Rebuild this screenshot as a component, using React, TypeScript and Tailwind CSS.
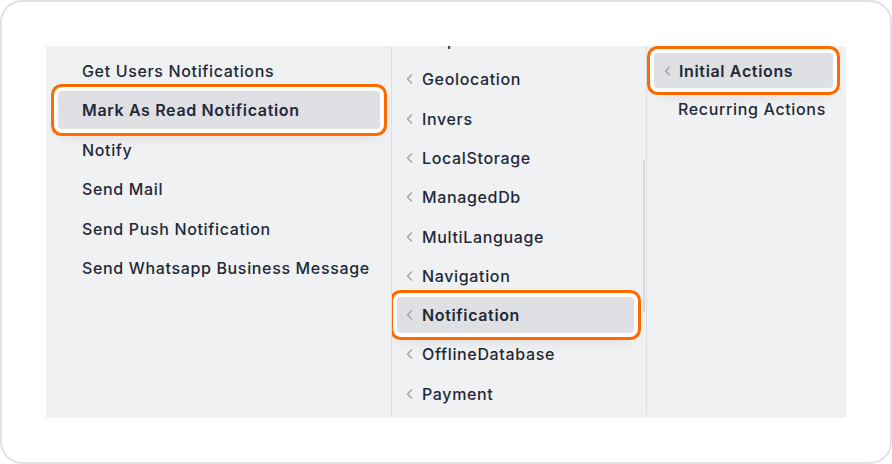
import type { FC } from 'react';

const font = { fontFamily: 'Inter, "Noto Sans", sans-serif' };

const Chevron: FC = () => (
  <svg width="7" height="10" viewBox="0 0 7 10" className="shrink-0">
    <polyline
      points="5.5,1 1.5,5 5.5,9"
      fill="none"
      stroke="#9ca3af"
      strokeWidth="1.4"
      strokeLinecap="round"
      strokeLinejoin="round"
    />
  </svg>
);

const actions = [
  'Get Users Notifications',
  'Mark As Read Notification',
  'Notify',
  'Send Mail',
  'Send Push Notification',
  'Send Whatsapp Business Message',
];

const components = [
  'Map',
  'Geolocation',
  'Invers',
  'LocalStorage',
  'ManagedDb',
  'MultiLanguage',
  'Navigation',
  'Notification',
  'OfflineDatabase',
  'Payment',
];

const highlight =
  'rounded-[4px] bg-[#dfe0e4] ring-[3px] ring-[#ff6a00] ring-offset-4 ring-offset-white shadow-lg';

export default function App() {
  return (
    <div
      className="w-[892px] h-[464px] bg-white border-2 border-[#dfe1e5] rounded-[22px] p-[44px]"
      style={font}
    >
      <div className="flex h-[372px] bg-[#f0f1f3] pb-[3px] text-[16px] font-medium tracking-[0.65px] text-[#1f2937]">
        {/* actions */}
        <div className="w-[346px] border-r border-[#dcdee2] pt-[5.3px] flex flex-col">
          {actions.map((a) =>
            a === 'Mark As Read Notification' ? (
              <div key={a} className="h-[39.4px] flex items-center">
                <div className={`ml-[12px] mr-[11px] flex-1 h-[38px] flex items-center pl-[24px] font-semibold ${highlight}`}>
                  {a}
                </div>
              </div>
            ) : (
              <div key={a} className="h-[39.4px] flex items-center pl-[36px]">
                {a}
              </div>
            )
          )}
        </div>

        {/* components */}
        <div className="relative w-[255px] border-r border-[#dcdee2] overflow-hidden">
          <div className="flex flex-col -mt-[25.6px]">
            {components.map((c) =>
              c === 'Notification' ? (
                <div key={c} className="h-[39.3px] flex items-center relative z-10">
                  <div className={`ml-[5px] mr-[12px] flex-1 h-[36px] flex items-center pl-[9px] gap-[9px] font-semibold ${highlight}`}>
                    <Chevron />
                    {c}
                  </div>
                </div>
              ) : (
                <div key={c} className="h-[39.3px] flex items-center pl-[14px] gap-[9px]">
                  <Chevron />
                  {c}
                </div>
              )
            )}
          </div>
          <div className="absolute right-[1px] top-[114px] w-[2px] h-[153px] rounded-full bg-[#d8dadf]" />
        </div>

        {/* events */}
        <div className="flex-1 flex flex-col pt-[7px]">
          <div className="flex items-center ml-[7px] mr-[13px]">
            <div className={`flex-1 h-[35px] flex items-center pl-[10px] gap-[8px] font-semibold ${highlight}`}>
              <Chevron />
              Initial Actions
            </div>
          </div>
          <div className="h-[39.4px] mt-[1px] flex items-center pl-[31px]">Recurring Actions</div>
        </div>
      </div>
    </div>
  );
}
